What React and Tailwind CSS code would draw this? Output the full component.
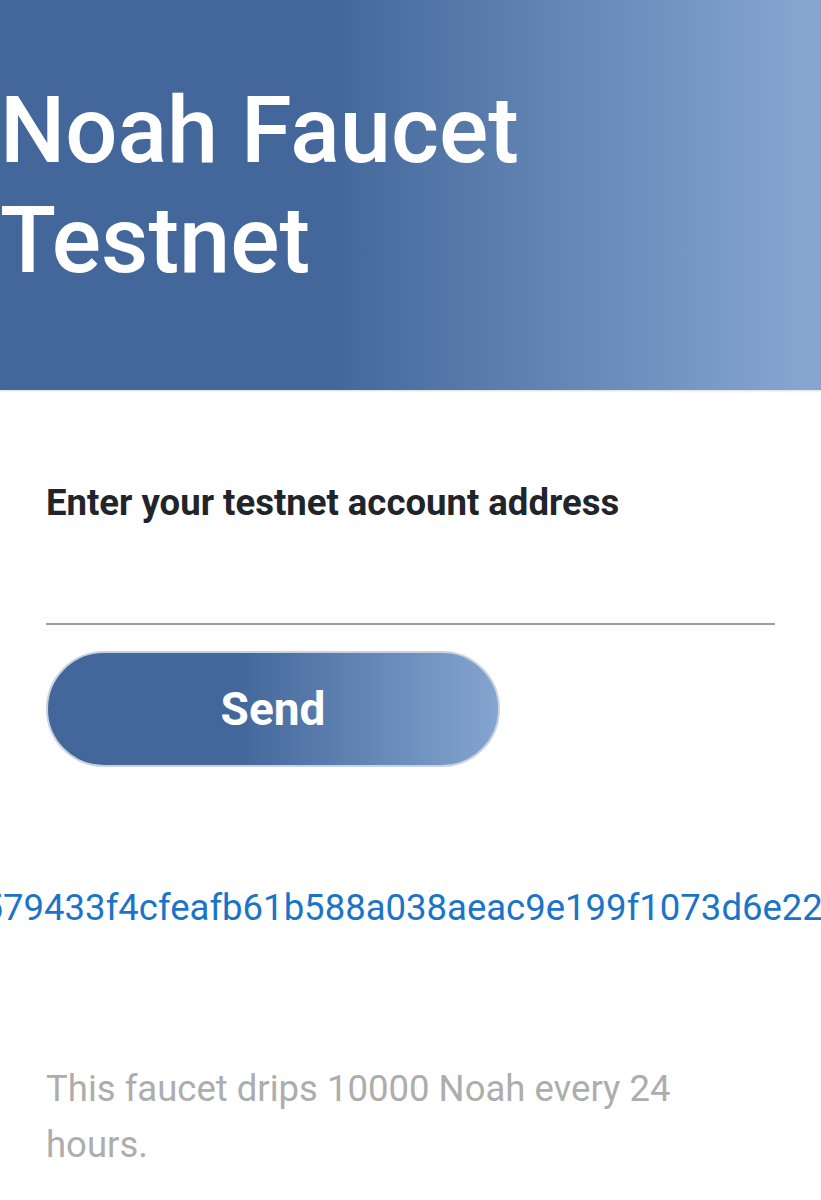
export default function App() {
  const hash = "0x3b8e1d2c0579433f4cfeafb61b588a038aeac9e199f1073d6e22a7f0c4b9d315";
  return (
    <div className="min-h-[1200px] bg-white" style={{ fontFamily: "Roboto, 'Noto Sans', sans-serif" }}>
      <header className="h-[390px] bg-[linear-gradient(to_right,#43679a_40%,#84a5d0_97%)] pt-[76px] shadow-[0_1px_2px_rgba(0,0,0,0.15)]">
        <h1 className="text-[92px] leading-[110px] font-medium text-white">
          Noah Faucet
          <br />
          Testnet
        </h1>
      </header>

      <main className="px-[46px] pt-[92px]">
        <label className="block text-[36.5px] leading-[42px] font-bold text-[#212529]">
          Enter your testnet account address
        </label>
        <input
          type="text"
          className="block w-full h-[101px] border-b-2 border-[#9e9e9e] bg-transparent outline-none text-[34px]"
        />
        <button className="mt-[26px] w-[454px] h-[116px] rounded-full border-2 border-[#c9d2df] bg-[linear-gradient(to_right,#43679a_42%,#84a5d0_100%)] text-white text-[46px] font-bold">
          Send
        </button>
      </main>

      <div className="mt-[120px] flex justify-center overflow-hidden">
        <a className="whitespace-nowrap text-[36.5px] leading-[41px] text-[#1b74c8]">{hash}</a>
      </div>

      <p className="mt-[133px] px-[46px] text-[36.5px] leading-[56px] text-[#adadad]">
        This faucet drips 10000 Noah every 24 hours.
      </p>
    </div>
  );
}
